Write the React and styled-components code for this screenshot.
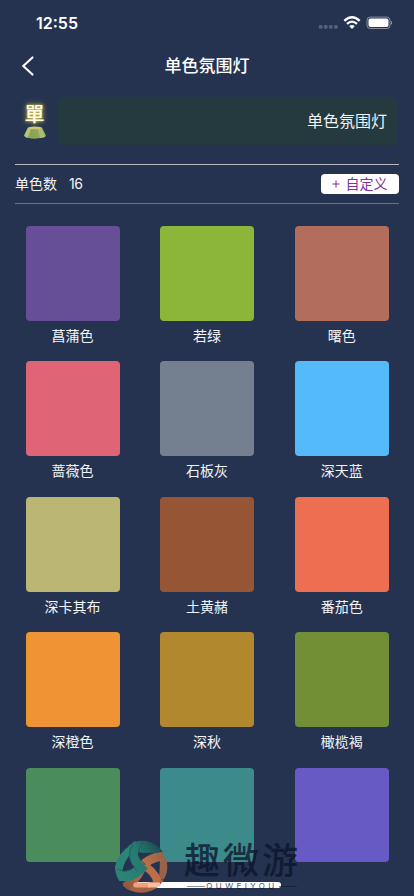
import React from "react"
import styled, { createGlobalStyle } from "styled-components"

const GlobalStyle = createGlobalStyle`
    * {
        box-sizing: border-box;
    }
    body {
        margin: 0;
        background-color: #253350;
        overflow: hidden;
    }
`

const Screen = styled.div`
    position: relative;
    width: 414px;
    height: 896px;
    overflow: hidden;
    display: flex;
    flex-direction: column;
    background-color: #253350;
    color: #f2f4f7;
    font-family: "Liberation Sans", "Noto Sans CJK SC", sans-serif;
`

const StatusBar = styled.div`
    height: 44px;
    flex: none;
    display: flex;
    justify-content: space-between;
    align-items: center;
    padding: 2px 22px 0 36px;
`

const Time = styled.span`
    font-family: Inter, sans-serif;
    font-size: 16px;
    font-weight: 600;
    line-height: 20px;
    color: #fff;
`

const StatusIcons = styled.svg`
    width: 76px;
    height: 16px;
    display: block;
`

const NavBar = styled.div`
    height: 44px;
    flex: none;
    display: grid;
    grid-template-columns: 60px 1fr 60px;
    align-items: center;
`

const BackIcon = styled.svg`
    width: 14px;
    height: 22px;
    margin-left: 21px;
    display: block;
`

const Title = styled.h1`
    margin: 0;
    padding-top: 2px;
    font-size: 17px;
    font-weight: 500;
    line-height: 24px;
    text-align: center;
    color: #fff;
`

const NameRow = styled.div`
    height: 76px;
    flex: none;
    display: flex;
    padding: 9px 16px 0 20px;
    gap: 9px;
`

const Lamp = styled.div`
    width: 29px;
    height: 48px;
    display: flex;
    flex-direction: column;
    align-items: center;
    padding-top: 4px;
`

const LampWord = styled.span`
    font-family: "Noto Sans CJK TC", sans-serif;
    font-size: 20px;
    font-weight: 500;
    line-height: 25px;
    color: #fffde8;
    text-shadow: 0 0 2px #d8c64c, 0 0 4px #b5a545, 0 0 7px #978d43;
`

const LampBase = styled.svg`
    width: 24px;
    height: 14px;
    display: block;
`

const NameField = styled.div`
    flex: 1;
    height: 48px;
    border-radius: 6px;
    background-color: #243a3f;
    display: flex;
    justify-content: flex-end;
    align-items: center;
    padding: 2px 11px 0 0;
    font-size: 16px;
    line-height: 24px;
`

const CountRow = styled.div`
    height: 40px;
    flex: none;
    margin: 0 15px;
    border-top: 1px solid #b3b8c2;
    border-bottom: 1px solid #66738a;
    display: flex;
    align-items: center;
    padding-bottom: 1px;
    font-size: 14px;
    line-height: 20px;
`

const Count = styled.span`
    margin-left: 12px;
    font-family: Inter, sans-serif;
    letter-spacing: -0.4px;
`

const AddBtn = styled.button`
    margin-left: auto;
    width: 78px;
    height: 20px;
    padding: 0 1px 0 0;
    border: none;
    border-radius: 4px;
    background-color: #fff;
    color: #832fa0;
    font-family: inherit;
    font-size: 14px;
    line-height: 20px;
    display: flex;
    align-items: center;
    justify-content: center;
    gap: 6px;
    cursor: pointer;
`

const PlusIcon = styled.svg`
    width: 8px;
    height: 8px;
`

// the last row is cut off above the home indicator
const ColorList = styled.div`
    height: 658px;
    flex: none;
    overflow: hidden;
    display: grid;
    grid-template-columns: repeat(3, 94px);
    grid-auto-rows: 135.4px;
    column-gap: 40.6px;
    padding: 22px 0 0 25.5px;
`

const ColorItem = styled.div`
    display: flex;
    flex-direction: column;
    align-items: center;
`

const Swatch = styled.div`
    width: 94px;
    height: 94.8px;
    flex: none;
    border-radius: 4px;
    background-color: ${(props) => props.$color};
`

const ColorName = styled.span`
    margin-top: 5px;
    font-size: 14px;
    line-height: 20px;
    white-space: nowrap;
`

const HomeBar = styled.div`
    position: absolute;
    left: 133px;
    top: 882px;
    width: 148px;
    height: 6px;
    border-radius: 3px;
    background-color: #fff;
`

const Watermark = styled.div`
    position: absolute;
    left: 114px;
    top: 838px;
    width: 190px;
    height: 58px;
    display: flex;
    gap: 14px;
`

const Globe = styled.svg`
    width: 55px;
    height: 56px;
    flex: none;
`

const Brand = styled.div`
    width: 118px;
    display: flex;
    flex-direction: column;
    padding-top: 6px;
    color: #0c142b;
    opacity: 0.76;
`

const BrandName = styled.span`
    font-size: 36px;
    font-weight: 500;
    line-height: 36px;
    letter-spacing: 3px;
    padding-left: 1px;
    white-space: nowrap;
`

const BrandLatin = styled.span`
    display: flex;
    align-items: center;
    gap: 1px;
    margin: 2px 4px 0 4px;
    font-family: Inter, sans-serif;
    font-size: 8px;
    line-height: 9px;
    letter-spacing: 3.4px;
    white-space: nowrap;

    &::before,
    &::after {
        content: "";
        flex: 1;
        height: 1px;
        background-color: #0c142b;
        opacity: 0.6;
    }
`

const colors = [
    { name: "菖蒲色", color: "#674f98" },
    { name: "若绿", color: "#8cb639" },
    { name: "曙色", color: "#b26d5c" },
    { name: "蔷薇色", color: "#df6475" },
    { name: "石板灰", color: "#74808f" },
    { name: "深天蓝", color: "#54bafa" },
    { name: "深卡其布", color: "#bcb674" },
    { name: "土黄赭", color: "#965534" },
    { name: "番茄色", color: "#ee6e52" },
    { name: "深橙色", color: "#f09335" },
    { name: "深秋", color: "#b1882e" },
    { name: "橄榄褐", color: "#728e35" },
    { name: "", color: "#4b8c5c" },
    { name: "", color: "#3d8a8a" },
    { name: "", color: "#685ac5" },
]

const Status = () => (
    <StatusIcons viewBox="0 0 76 16">
        <g fill="#fff" opacity="0.22">
            <rect x="2.8" y="10" width="3.6" height="3.8" rx="1.2" />
            <rect x="7.9" y="10" width="3.6" height="3.8" rx="1.2" />
            <rect x="13" y="10" width="3.6" height="3.8" rx="1.2" />
            <rect x="18.1" y="10" width="3.6" height="3.8" rx="1.2" />
        </g>
        <g fill="none" stroke="#fff" strokeWidth="2.3">
            <path d="M28.3 5.9Q36 -1.3 43.7 5.9" />
            <path d="M31 8.9Q36 4.3 41 8.9" />
        </g>
        <path d="M33.2 11.1Q36 8.9 38.8 11.1L36 13.9Z" fill="#fff" />
        <rect x="51" y="2.1" width="23" height="11.4" rx="3.2" fill="none" stroke="#fff" opacity="0.45" />
        <rect x="52.5" y="3.6" width="20" height="8.4" rx="1.9" fill="#fff" />
        <path d="M75 6Q76.2 6.5 76.2 7.8Q76.2 9.2 75 9.7Z" fill="#fff" opacity="0.5" />
    </StatusIcons>
)

const LampFoot = () => (
    <LampBase viewBox="0 0 24 14">
        <path d="M5 1.5Q12 -0.5 19 1.5L23 9.5Q22.5 11.3 20 11.7Q12 13.2 4 11.7Q1.5 11.3 1.2 9.5Z" fill="#8fa95a" />
        <path d="M5 1.5L1.2 9.5Q2 11.2 5 11.7L8 3Z" fill="#b3c777" />
        <path d="M8 3L5 11.8Q9 12.6 13 12.4L12.5 3Z" fill="#8ba456" />
        <path d="M15 3L17 12L22 10.8L18.5 2Z" fill="#a9bf6c" />
        <ellipse cx="12" cy="2" rx="6.7" ry="1.3" fill="#d8c477" />
    </LampBase>
)

const GlobeLogo = () => (
    <Globe viewBox="0 0 55 56">
        <defs>
            <clipPath id="globe">
                <circle cx="27.2" cy="28.6" r="26.2" />
            </clipPath>
            <linearGradient id="teal" gradientUnits="userSpaceOnUse" x1="2" y1="36" x2="46" y2="10">
                <stop offset="0" stopColor="#2b8577" />
                <stop offset="0.6" stopColor="#28796f" />
                <stop offset="1" stopColor="#1a4e57" />
            </linearGradient>
            <linearGradient id="copper" gradientUnits="userSpaceOnUse" x1="14" y1="48" x2="50" y2="18">
                <stop offset="0" stopColor="#96583f" />
                <stop offset="0.5" stopColor="#bf744b" />
                <stop offset="1" stopColor="#9a6248" />
            </linearGradient>
        </defs>
        <g clipPath="url(#globe)" fill="none">
            {/* copper half */}
            <path d="M46 17Q53 17 54 28Q54 36 49 42L45 40Q46 30 46 17Z" fill="#9a6248" />
            <path d="M10 46Q20 50 40 43L50 42Q42 56 26 56Q14 55 8 48Z" fill="#a5613f" />
            <path d="M28 27Q39 31 44 44" stroke="#b96f48" strokeWidth="8" />
            <path d="M11 49Q22 42 27 31T50 18" stroke="url(#copper)" strokeWidth="9" />
            {/* teal half */}
            <path d="M14 8Q28 -2 42 6Q48 10 49 14Q38 15 29 15L20 13Z" fill="url(#teal)" />
            <path d="M0 38Q0 17 17 7L20 12Q10 22 8 34Z" fill="#2b8577" />
            <path d="M24 5Q13 18 28 30" stroke="url(#teal)" strokeWidth="9" />
            <path d="M1 36Q17 43 30 27" stroke="url(#teal)" strokeWidth="10" />
            <path d="M19 6Q10 20 23 33M29 4Q19 17 32 27M4 31Q13 37 21 28" stroke="#1d5459" strokeWidth="0.7" />
            {/* home indicator showing through */}
            <path d="M21.8 47H35" stroke="#efa17e" strokeWidth="5" strokeLinecap="round" />
            <path d="M34 47H46" stroke="#f7bea0" strokeWidth="5" />
        </g>
    </Globe>
)

const App = () => {
    return (
        <>
            <GlobalStyle />
            <Screen>
                <StatusBar>
                    <Time>12:55</Time>
                    <Status />
                </StatusBar>
                <NavBar>
                    <BackIcon viewBox="0 0 14 22">
                        <path d="M11.5 2.4L2.3 11L11.5 19.6" fill="none" stroke="#fff" strokeWidth="2.1" strokeLinecap="round" />
                    </BackIcon>
                    <Title>单色氛围灯</Title>
                </NavBar>
                <NameRow>
                    <Lamp>
                        <LampWord>單</LampWord>
                        <LampFoot />
                    </Lamp>
                    <NameField>单色氛围灯</NameField>
                </NameRow>
                <CountRow>
                    <span>单色数</span>
                    <Count>16</Count>
                    <AddBtn>
                        <PlusIcon viewBox="0 0 8 8">
                            <path d="M4 0.5V7.5M0.5 4H7.5" stroke="#832fa0" strokeWidth="1" />
                        </PlusIcon>
                        自定义
                    </AddBtn>
                </CountRow>
                <ColorList>
                    {colors.map((c) => (
                        <ColorItem key={c.color}>
                            <Swatch $color={c.color} />
                            {c.name && <ColorName>{c.name}</ColorName>}
                        </ColorItem>
                    ))}
                </ColorList>
                <HomeBar />
                <Watermark>
                    <GlobeLogo />
                    <Brand>
                        <BrandName>趣微游</BrandName>
                        <BrandLatin>QUWEIYOU</BrandLatin>
                    </Brand>
                </Watermark>
            </Screen>
        </>
    )
}

export default App
